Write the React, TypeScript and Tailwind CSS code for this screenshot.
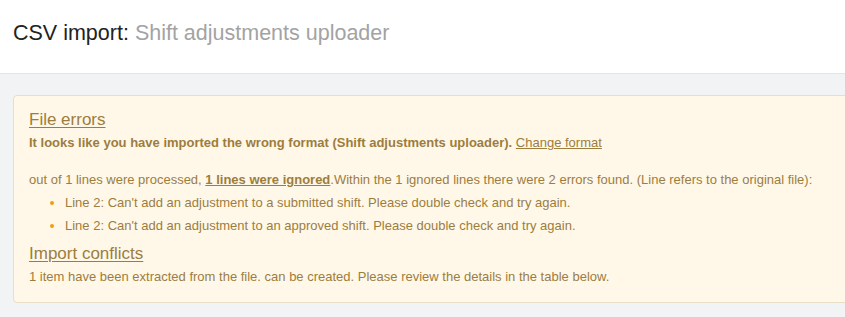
import React from 'react';

const errors = [
  "Line 2: Can't add an adjustment to a submitted shift. Please double check and try again.",
  "Line 2: Can't add an adjustment to an approved shift. Please double check and try again.",
];

export default function App() {
  return (
    <div className="min-h-[317px] bg-[#f2f3f5] font-['Liberation_Sans',Arial,sans-serif]">
      <div className="h-[74px] bg-white border-b border-[#e3e4e6] px-[13px] pt-[20px]">
        <h1 className="text-[21.5px] leading-[26px] text-[#222]">
          CSV import: <span className="text-[#a3a3a3]">Shift adjustments uploader</span>
        </h1>
      </div>

      <div className="pl-[13px] pt-[21px] pb-[15px]">
        <div className="w-[850px] bg-[#fff8e9] border border-[#e9dfc6] rounded-[4px] px-[15px] pt-[14px] pb-[15px] text-[13px] text-[#9c7d3e]">
          <h3 className="text-[17px] leading-[20px] underline underline-offset-2 decoration-1">File errors</h3>
          <p className="mt-[3px] leading-[20px] font-bold">
            It looks like you have imported the wrong format (Shift adjustments uploader).{' '}
            <a className="font-normal underline">Change format</a>
          </p>
          <p className="mt-[17px] leading-[20px]">
            out of 1 lines were processed, <span className="font-bold underline">1 lines were ignored</span>.Within the 1 ignored lines there were 2 errors found. (Line refers to the original file):
          </p>
          <ul className="mt-[1px] pl-[21px]">
            {errors.map((e, i) => (
              <li key={i} className="flex items-center h-[23px]">
                <span className="w-[4px] h-[4px] rounded-full bg-[#f39c12] mr-[11px]" />
                {e}
              </li>
            ))}
          </ul>
          <h3 className="mt-[7px] text-[17px] leading-[20px] underline underline-offset-2 decoration-1">Import conflicts</h3>
          <p className="mt-[3px] leading-[20px]">
            1 item have been extracted from the file. can be created. Please review the details in the table below.
          </p>
        </div>
      </div>
    </div>
  );
}
